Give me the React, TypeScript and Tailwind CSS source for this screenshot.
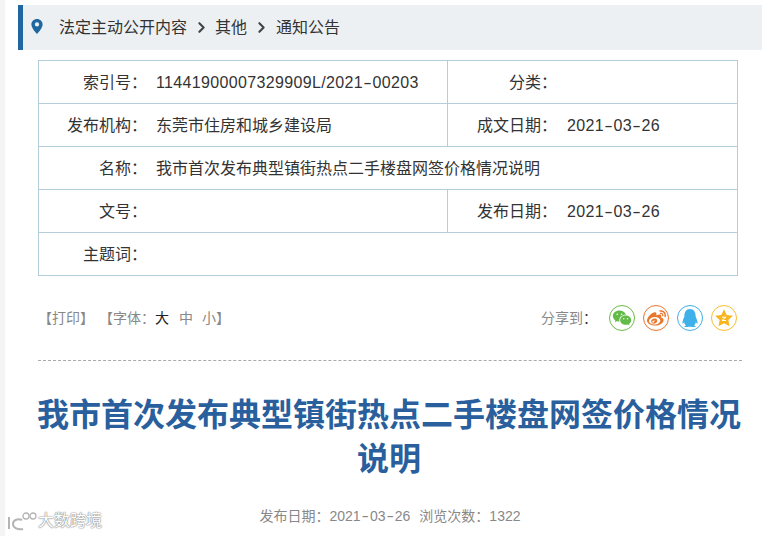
import React from 'react';
import { FaWeibo, FaQq } from 'react-icons/fa';
import { RiWechatFill } from 'react-icons/ri';
import { ChevronRight } from 'lucide-react';

const cjk = "font-['Liberation_Sans','Noto_Sans_CJK_SC',sans-serif]";

const Label: React.FC<{ children: React.ReactNode }> = ({ children }) => (
  <div className="flex items-center justify-end pt-[2px]">{children}</div>
);

const Value: React.FC<{ children?: React.ReactNode; className?: string }> = ({ children, className }) => (
  <div className={`flex items-center pl-[9px] pt-[2px] tracking-[0.35px] ${className}`}>{children}</div>
);

// the reference font has a much wider hyphen than Liberation Sans
const Code: React.FC<{ text: string; gap: string }> = ({ text, gap }) => (
  <span>
    {text.split('-').map((part, i) => (
      <React.Fragment key={i}>
        {i > 0 && <span className={`inline-block scale-x-[1.6] ${gap}`}>-</span>}
        {part}
      </React.Fragment>
    ))}
  </span>
);

export default function App() {
  return (
    <div className={`h-[536px] w-[769px] overflow-hidden bg-white relative flex ${cjk}`}>
      {/* left page edge */}
      <div className="w-[5px] shrink-0 bg-[#f4f4f4]" />

      <div className="flex-1 pl-[13px] pr-[7px] pt-[5px]">
        {/* Breadcrumb */}
        <div className="h-[45px] flex items-center bg-[#edf0f3] border-l-[5px] border-[#2067a1] text-[16px] text-[#333]">
          <svg viewBox="0 0 12 16" className="w-[12px] h-[15px] ml-[8px] mr-[16px] mb-[3px]">
            <path
              fillRule="evenodd"
              fill="#2067a1"
              d="M6 0C2.7 0 0 2.6 0 5.9 0 10 6 16 6 16s6-6 6-10.100C12 2.600 9.300 0 6 0zm0 8.100a2.300 2.300 0 1 1 0-4.600 2.300 2.300 0 0 1 0 4.600z"
            />
          </svg>
          <span>法定主动公开内容</span>
          <ChevronRight size={17} strokeWidth={3} className="ml-[6px] mr-[5px] text-[#444]" />
          <span>其他</span>
          <ChevronRight size={17} strokeWidth={3} className="mx-[6px] text-[#444]" />
          <span>通知公告</span>
        </div>

        {/* Info table */}
        <div className="mt-[10px] ml-[20px] w-[700px] border border-[#b3cddb] text-[16px] text-[#333]">
          <div className="grid grid-cols-[108px_301px_109px_1fr] h-[42px]">
            <Label>索引号：</Label>
            <Value className="border-r border-[#b3cddb]">
              <Code text="11441900007329909L/2021-00203" gap="mx-[1.9px]" />
            </Value>
            <Label>分类：</Label>
            <Value />
          </div>
          <div className="grid grid-cols-[108px_301px_109px_1fr] h-[43px] border-t border-[#b3cddb]">
            <Label>发布机构：</Label>
            <Value className="border-r border-[#b3cddb] tracking-normal">东莞市住房和城乡建设局</Value>
            <Label>成文日期：</Label>
            <Value className="ml-[1px]">
              <Code text="2021-03-26" gap="mx-[1.9px]" />
            </Value>
          </div>
          <div className="grid grid-cols-[108px_1fr] h-[43px] border-t border-[#b3cddb]">
            <Label>名称：</Label>
            <Value className="tracking-normal">我市首次发布典型镇街热点二手楼盘网签价格情况说明</Value>
          </div>
          <div className="grid grid-cols-[108px_301px_109px_1fr] h-[43px] border-t border-[#b3cddb]">
            <Label>文号：</Label>
            <Value className="border-r border-[#b3cddb]" />
            <Label>发布日期：</Label>
            <Value className="ml-[1px]">
              <Code text="2021-03-26" gap="mx-[1.9px]" />
            </Value>
          </div>
          <div className="grid grid-cols-[108px_1fr] h-[43px] border-t border-[#b3cddb]">
            <Label>主题词：</Label>
            <Value />
          </div>
        </div>

        {/* Print / font size / share */}
        <div className="mt-[24px] ml-[20px] w-[699px] h-[36px] flex items-center justify-between text-[14px] text-[#888]">
          <div className="flex items-center">
            <span>【打印】</span>
            <span className="ml-[5px]">【字体：</span>
            <span className="text-[#222]">大</span>
            <span className="ml-[10px]">中</span>
            <span className="ml-[9px]">小】</span>
          </div>
          <div className="flex items-center">
            <span className="mr-[12px]">分享到<span className="text-[#333]">：</span></span>
            <div className="flex gap-[8px]">
              <div className="w-[26px] h-[26px] rounded-full border border-[#6cbb45] flex items-center justify-center">
                <RiWechatFill size={20} className="text-[#62bb46]" />
              </div>
              <div className="w-[26px] h-[26px] rounded-full border border-[#e8762d] flex items-center justify-center">
                <FaWeibo size={19} className="text-[#e8762d]" />
              </div>
              <div className="w-[26px] h-[26px] rounded-full border border-[#3fb0ea] flex items-center justify-center">
                <FaQq size={18} className="text-[#3fb0ea]" />
              </div>
              <div className="w-[26px] h-[26px] rounded-full border border-[#f8bd2d] flex items-center justify-center">
                <svg viewBox="0 0 24 24" className="w-[20px] h-[20px]">
                  <path
                    fill="#f8b51d"
                    d="M12 1.500l3.200 6.900 7.500.900-5.500 5.100 1.500 7.400L12 18.200l-6.700 3.600 1.500-7.400L1.300 9.300l7.500-.900z"
                  />
                  <path fill="none" stroke="#fff" strokeWidth="1.200" d="M9.500 11h5l-5 4h5" />
                </svg>
              </div>
            </div>
          </div>
        </div>

        <div className="mt-[24px] ml-[20px] w-[704px] border-t border-dashed border-[#aaa]" />

        {/* Title */}
        <h1 className="mt-[32px] ml-[19px] w-[704px] text-center text-[32px] leading-[44px] font-bold text-[#2a5f9e]">
          我市首次发布典型镇街热点二手楼盘网签价格情况说明
        </h1>

        {/* Meta */}
        <div className="mt-[25px] ml-[20px] w-[704px] flex justify-center text-[14px] text-[#888]">
          <span>
            发布日期：
            <Code text="2021-03-26" gap="mx-[2.3px]" />
          </span>
          <span className="ml-[9px]">浏览次数：1322</span>
        </div>
      </div>

      {/* Watermark */}
      <div className="absolute left-[7px] top-[509px] flex items-center text-[16px] text-white [text-shadow:0_0_1px_#888,0_0_1px_#888,0_0_2px_#aaa]">
        <svg viewBox="0 0 30 20" className="w-[30px] h-[20px] mr-[1px]" fill="none" stroke="#b4b4b4" strokeWidth="2">
          <path d="M2 6v12M15 9c-4-2-9 0-9 4s5 6 10 5" />
          <circle cx="19" cy="5" r="3" strokeWidth="1.300" />
          <circle cx="26" cy="5" r="3" strokeWidth="1.300" />
        </svg>
        <span>大数跨境</span>
      </div>
    </div>
  );
}
